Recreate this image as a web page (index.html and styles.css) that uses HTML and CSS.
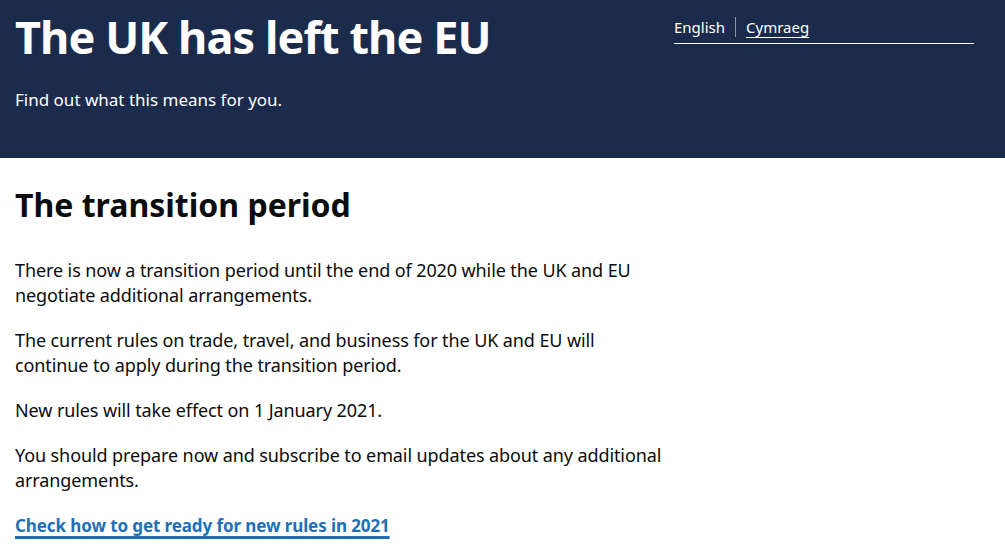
FILE: index.html
```html
<!DOCTYPE html>
<html lang="en">
<head>
<meta charset="utf-8">
<title>The UK has left the EU</title>
<link rel="stylesheet" href="styles.css">
</head>
<body>
<header class="hero">
  <div class="hero-inner">
    <div class="hero-text">
      <h1 class="hero-title">The UK has left the EU</h1>
      <p class="hero-lead">Find out what this means for you.</p>
    </div>
    <nav class="lang-switch">
      <ul class="lang-list">
        <li class="lang-item lang-current">English</li>
        <li class="lang-item"><a class="lang-link" href="#">Cymraeg</a></li>
      </ul>
    </nav>
  </div>
</header>
<main class="content">
  <h2 class="section-title">The transition period</h2>
  <p class="body-text">There is now a transition period until the end of 2020 while the UK and EU negotiate additional arrangements.</p>
  <p class="body-text">The current rules on trade, travel, and business for the UK and EU will continue to apply during the transition period.</p>
  <p class="body-text">New rules will take effect on 1 January 2021.</p>
  <p class="body-text">You should prepare now and subscribe to email updates about any additional arrangements.</p>
  <p class="body-text"><a class="cta-link" href="#">Check how to get ready for new rules in 2021</a></p>
</main>
</body>
</html>
```

FILE: styles.css
```css
* { box-sizing: border-box; }

html, body {
  margin: 0;
  padding: 0;
  background: #ffffff;
  color: #0b0c0c;
  font-family: "Noto Sans", "Liberation Sans", Arial, sans-serif;
}

.hero {
  background: #1b2b4c;
  color: #ffffff;
  height: 158px;
}

.hero-inner {
  display: flex;
  justify-content: space-between;
  padding: 0 31px 0 15px;
}

.hero-title {
  margin: 0;
  padding-top: 8px;
  font-size: 45px;
  line-height: 58px;
  font-weight: 700;
  letter-spacing: -0.9px;
}

.hero-lead {
  margin: 22px 0 0;
  font-size: 17px;
  line-height: 24px;
}

.lang-switch {
  width: 300px;
  padding-top: 17px;
}

.lang-list {
  list-style: none;
  margin: 0;
  padding: 0 0 6px;
  display: flex;
  border-bottom: 1px solid #ffffff;
  font-size: 15px;
  line-height: 20px;
}

.lang-item {
  padding: 0 10px;
}

.lang-item:first-child {
  padding-left: 0;
  border-right: 1px solid #8c94a5;
}

.lang-link {
  color: #ffffff;
  text-decoration: underline;
  text-underline-offset: 4px;
}

.content {
  padding: 24px 15px 0;
  max-width: 681px;
}

.section-title {
  margin: 0 0 31px;
  font-size: 32px;
  line-height: 45px;
  font-weight: 700;
}

.body-text {
  margin: 0 0 20px;
  font-size: 18px;
  line-height: 25px;
  letter-spacing: -0.1px;
}

.cta-link {
  font-size: 17px;
  color: #1d70b8;
  font-weight: 700;
  text-decoration: underline;
  text-decoration-thickness: 3px;
  text-underline-offset: 4px;
}
```
